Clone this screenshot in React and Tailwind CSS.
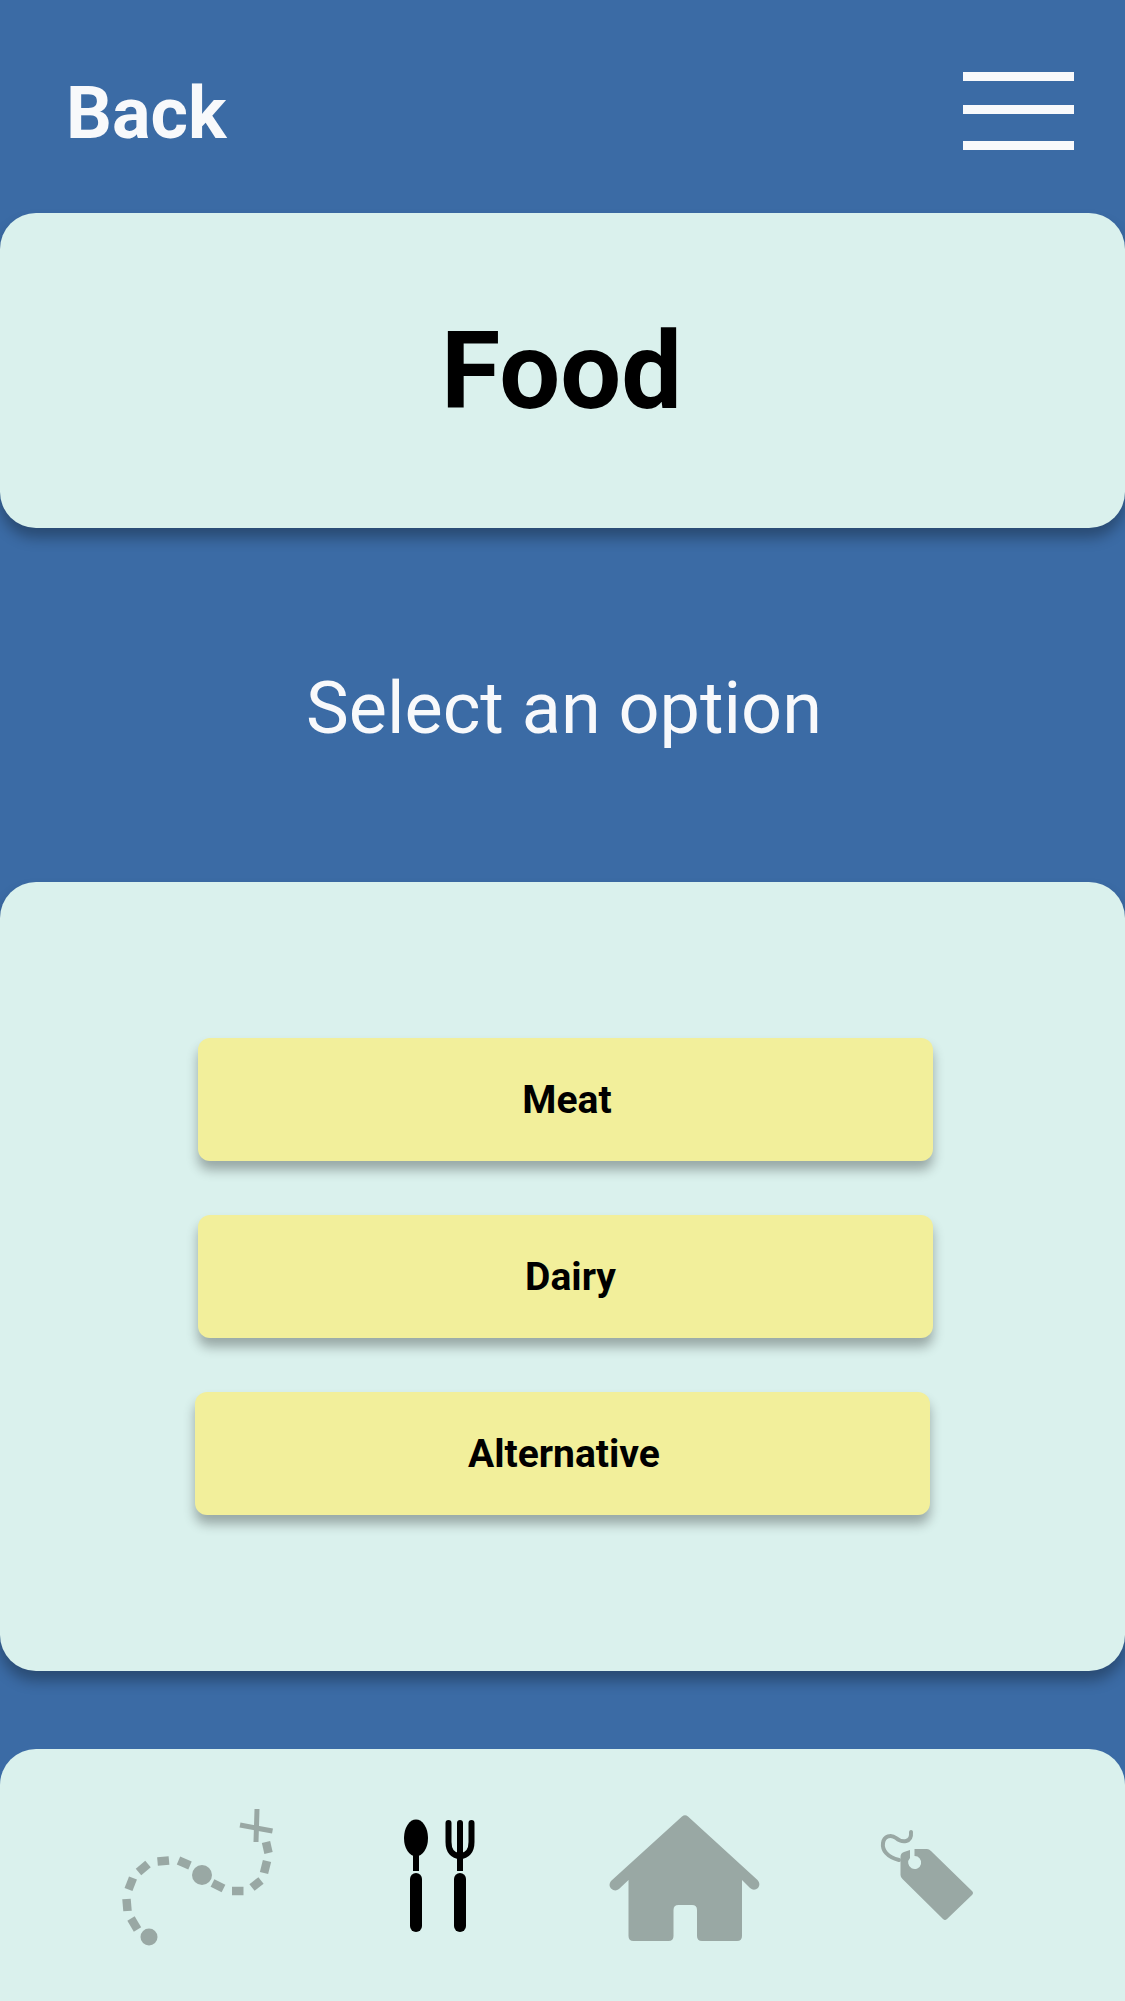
const font = { fontFamily: "Roboto, sans-serif" };

function Option({ label, className, labelClass }) {
  return (
    <div className={`flex h-[123px] w-[735px] items-center justify-center rounded-[12px] bg-[#f2ef9b] pt-[2px] shadow-[0_9px_12px_rgba(0,0,0,0.3)] ${className}`}>
      <span className={`text-[39px] font-bold leading-none text-black ${labelClass}`}>{label}</span>
    </div>
  );
}

const dashes = [
  [131, 1918.500, 137.500, 1929.500],
  [126.500, 1899, 127.500, 1911],
  [133, 1878, 128.500, 1889.500],
  [148, 1864, 138.500, 1872],
  [169, 1860.500, 157.500, 1861.500],
  [190, 1865.500, 178.500, 1860.500],
  [212.500, 1883, 223.500, 1888.500],
  [232, 1891, 243.500, 1891],
  [252, 1887.500, 261, 1880.500],
  [267, 1861, 264, 1873],
  [266, 1842, 268.500, 1853],
];

function RouteIcon() {
  return (
    <svg width="160" height="150" viewBox="120 1800 160 150" className="ml-[120px] shrink-0">
      <circle cx="149" cy="1937" r="8.5" fill="#99a8a4" />
      <circle cx="202" cy="1875" r="10" fill="#99a8a4" />
      {dashes.map((d, i) => (
        <line key={i} x1={d[0]} y1={d[1]} x2={d[2]} y2={d[3]} stroke="#99a8a4" strokeWidth="8.5" />
      ))}
      <line x1="257" y1="1809" x2="256" y2="1842" stroke="#99a8a4" strokeWidth="5" />
      <line x1="240" y1="1825" x2="272.5" y2="1831" stroke="#99a8a4" strokeWidth="5" />
    </svg>
  );
}

function CutleryIcon() {
  return (
    <svg width="80" height="150" viewBox="400 1800 80 150" className="ml-[120px] shrink-0">
      <ellipse cx="416" cy="1838" rx="12" ry="18.5" fill="#000" />
      <rect x="413" y="1850" width="6" height="21" fill="#000" />
      <rect x="410" y="1873" width="12" height="59" rx="6" fill="#000" />
      <path d="M448.5 1823V1842C448.5 1851 453 1856 460 1856C467 1856 471.5 1851 471.5 1842V1823" fill="none" stroke="#000" strokeWidth="6" strokeLinecap="round" />
      <line x1="460" y1="1823" x2="460" y2="1856" stroke="#000" strokeWidth="6" strokeLinecap="round" />
      <rect x="457" y="1855" width="6" height="16" fill="#000" />
      <rect x="454" y="1873" width="12" height="59" rx="6" fill="#000" />
    </svg>
  );
}

function HomeIcon() {
  return (
    <svg width="165" height="150" viewBox="600 1800 165 150" className="ml-[122px] shrink-0">
      <path
        d="M680 1816.5Q683 1814 686 1816.5L755.500 1880Q759 1884 756 1888Q752 1891.500 748 1888L740 1880V1936Q740 1941 735 1941H700Q695 1941 695 1936V1910Q695 1905 690 1905H676.500Q671.500 1905 671.500 1910V1936Q671.500 1941 666.500 1941H631.500Q626.500 1941 626.500 1936V1880L617 1889Q613 1892 609 1888.500Q606 1885 609 1881Z"
        fill="#99a8a4"
      />
    </svg>
  );
}

function TagIcon() {
  return (
    <svg width="100" height="150" viewBox="875 1800 100 150" className="ml-[111px] shrink-0">
      <path
        d="M901 1852L907 1850V1858A6.500 6.500 0 1 0 911.500 1856V1849L924 1849Q926 1849 928 1851L969 1891Q971 1893 969 1895L944 1919Q942 1921 940 1919L899.500 1879Q897.500 1877 897.500 1875V1857Q897.500 1853 901 1852Z"
        fill="#99a8a4"
      />
      <path
        d="M896 1860C884 1857 879 1850 880 1843C881 1836 888 1834 893 1838C899 1843 909 1843 908 1832"
        fill="none"
        stroke="#99a8a4"
        strokeWidth="4"
        strokeLinecap="round"
      />
    </svg>
  );
}

export default function App() {
  return (
    <div className="h-[2001px] w-[1125px] overflow-hidden bg-[#3b6ba5]" style={font}>
      <header className="flex h-[213px] items-start justify-between pl-[66px] pr-[51px]">
        <span className="mt-[74px] text-[72px] font-bold leading-[80px] text-[#f8f9fb]">Back</span>
        <div className="mt-[72px] flex w-[111px] flex-col">
          <div className="h-[9px] bg-[#f8f9fb]" />
          <div className="mt-[24px] h-[9px] bg-[#f8f9fb]" />
          <div className="mt-[27px] h-[9px] bg-[#f8f9fb]" />
        </div>
      </header>

      <section className="flex h-[315px] items-center justify-center rounded-[36px] bg-[#daf1ed] pr-[2px] shadow-[0_10px_14px_rgba(0,0,0,0.3)]">
        <h1 className="text-[108px] font-bold leading-none text-black">Food</h1>
      </section>

      <div className="flex h-[354px] items-center justify-center pl-[3px] pt-[7px]">
        <p className="text-[72px] font-normal leading-none text-[#f8f9fb]">Select an option</p>
      </div>

      <section className="h-[789px] rounded-[36px] bg-[#daf1ed] pt-[156px] shadow-[0_10px_14px_rgba(0,0,0,0.3)]">
        <Option label="Meat" className="ml-[198px]" labelClass="pl-[3px]" />
        <Option label="Dairy" className="ml-[198px] mt-[54px]" labelClass="pl-[10px]" />
        <Option label="Alternative" className="ml-[195px] mt-[54px]" labelClass="pl-[3px]" />
      </section>

      <nav className="mt-[78px] flex h-[252px] items-start rounded-t-[36px] bg-[#daf1ed] pt-[51px]">
        <RouteIcon />
        <CutleryIcon />
        <HomeIcon />
        <TagIcon />
      </nav>
    </div>
  );
}
